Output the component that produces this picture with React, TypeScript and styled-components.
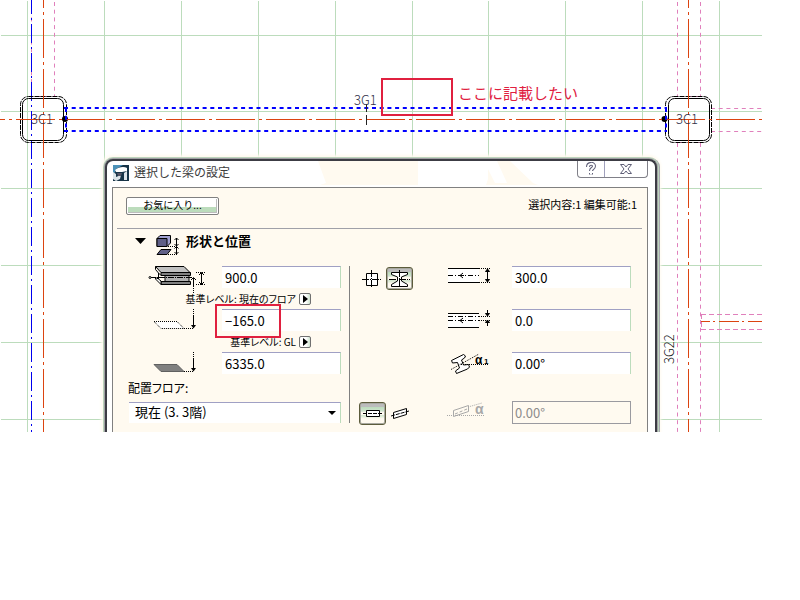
import React from 'react';
import styled, { createGlobalStyle } from 'styled-components';

const GlobalStyle = createGlobalStyle`
  * { box-sizing: border-box; }
  body { margin: 0; background: #fff; color: #000; font-family: "Noto Sans CJK JP", sans-serif; font-size: 12px; }
  button, input, select { font: inherit; color: inherit; }
`;

const Canvas = styled.main`
  position: relative;
  overflow: hidden;
  margin-right: 38px;
  padding: 159px 105px 0;
`;

const Plan = styled.svg`
  position: absolute;
  top: 0;
  left: 0;
  font-family: "Noto Sans CJK JP", sans-serif;
  font-weight: 300;
  font-size: 13px;
`;

const Marker = styled.div<{ $x: number; $y: number; $w: number; $h: number }>`
  position: absolute;
  left: ${p => p.$x}px;
  top: ${p => p.$y}px;
  width: ${p => p.$w}px;
  height: ${p => p.$h}px;
  border: 2px solid #e0203f;
  pointer-events: none;
`;

const Note = styled.div`
  position: absolute;
  left: 458px;
  top: 82px;
  color: #e0203f;
  font-size: 15px;
  line-height: 22px;
  white-space: nowrap;
`;

const Dialog = styled.section`
  position: relative;
  background: #fff;
  border: 2px solid #3c3c44;
  border-bottom: 0;
  border-radius: 8px 8px 0 0;
  box-shadow: 0 0 0 1px #a0a0a4, 0 0 0 2px #bcd4bc, 2px 0 0 1px #a8a8b0, 0 0 3px 4px #fffaf0;
  padding: 0 7px 0 5px;
`;

const TitleBar = styled.header`
  position: relative;
  display: flex;
  align-items: flex-start;
  height: 26px;
`;

const Glare = styled.svg`
  position: absolute;
  top: 0;
  left: 0;
`;

const Title = styled.h1`
  position: relative;
  flex: 1;
  margin: 2px 0 0 5px;
  color: #3c3c3c;
  font-size: 12px;
  font-weight: 400;
  line-height: 18px;
`;

const AppIcon = styled.svg`
  position: relative;
  margin: 4px 0 0 1px;
`;

const Caption = styled.div`
  position: relative;
  display: flex;
  border: 1px solid #808088;
  border-top: 0;
  border-radius: 0 0 4px 4px;
`;

const CaptionButton = styled.button<{ $w: number }>`
  display: grid;
  place-items: center;
  width: ${p => p.$w}px;
  height: 16px;
  padding: 0;
  border: 0;
  background: transparent;
  & + & { border-left: 1px solid #a0a0bc; }
`;

const Panel = styled.div`
  background: #fffaf0;
  border: 1px solid #808080;
  border-bottom: 0;
  padding: 0 5px 7px 4px;
`;

const TopRow = styled.div`
  display: flex;
  justify-content: space-between;
  align-items: flex-start;
  height: 41px;
  padding: 9px 5px 0 9px;
  border-bottom: 1px solid #a0a0a8;
`;

const Favorites = styled.button`
  width: 93px;
  height: 18px;
  padding: 0 0 3px;
  border: 1px solid #808080;
  border-radius: 2px;
  background: linear-gradient(#fff 55%, #bcdcbc 55%);
  box-shadow: inset 0 0 0 1px #fff, inset -1px -1px 0 1px #bcbcbc;
  font-size: 10px;
  line-height: 13px;
`;

const Counts = styled.span`
  font-size: 11px;
  line-height: 14px;
  font-feature-settings: "palt";
`;

const SectionHead = styled.h2`
  display: flex;
  align-items: center;
  height: 37px;
  margin: 0;
  padding: 0 0 14px 18px;
  font-size: 13px;
  font-weight: 700;
  line-height: 22px;
`;

const Toggle = styled.button`
  display: flex;
  padding: 0;
  border: 0;
  background: transparent;
  margin-right: 10px;
`;

const HeadIcon = styled.svg`
  align-self: flex-end;
  margin: 0 6px -4px 0;
`;

const Columns = styled.div`
  display: grid;
  grid-template-columns: 233px 1fr;
`;

const Left = styled.div`
  padding: 0 8px 0 11px;
  border-right: 1px solid #808080;
  height: 157px;
`;

const Right = styled.div`
  display: grid;
  grid-template-columns: 88px 1fr 119px;
  grid-template-rows: 43px 43px 49px 24px;
  padding: 0 11px 0 9px;
`;

const Row = styled.div`
  display: grid;
  grid-template-columns: 94px 1fr;
  height: 22px;
`;

const IconSlot = styled.span<{ $left?: number }>`
  height: 22px;
  padding-left: ${p => p.$left ?? 0}px;
`;

const Field = styled.input`
  width: 100%;
  min-width: 0;
  height: 22px;
  padding: 0 3px;
  border: 0 solid;
  border-width: 1px 1px 0 0;
  border-color: #a0a0c4 #bcdcbc transparent transparent;
  border-radius: 0;
  outline: 0;
  background: #fff;
  font-size: 13px;
  &:disabled {
    height: 23px;
    border: 1px solid #9a9aa0;
    padding: 0 2px;
    background: #fffaf0;
    color: #8c8c8c;
  }
`;

const Basis = styled.div`
  display: flex;
  justify-content: flex-end;
  align-items: center;
  gap: 3px;
  height: 21px;
  padding-right: 30px;
  font-size: 10px;
  line-height: 16px;
  font-feature-settings: "palt";
`;

const Pop = styled.button`
  display: grid;
  place-items: center;
  width: 12px;
  height: 12px;
  padding: 0;
  border: 1px solid #707070;
  border-radius: 2px;
  background: linear-gradient(90deg, #fff 60%, #cfe4cf);
`;

const FloorLabel = styled.label`
  display: block;
  height: 28px;
  line-height: 27px;
  font-size: 12px;
  font-feature-settings: "palt";
`;

const SelectWrap = styled.div`
  position: relative;
  display: grid;
  align-items: center;
  margin-left: 1px;
`;

const Select = styled.select`
  appearance: none;
  width: 100%;
  height: 21px;
  padding: 0 6px 3px;
  border: 0 solid;
  border-width: 1px 1px 0 0;
  border-color: #a0a0c4 #bcdcbc;
  border-radius: 0;
  background: #fff;
  font-size: 13px;
  line-height: 17px;
  font-feature-settings: "palt";
`;

const Arrow = styled.svg`
  position: absolute;
  right: 5px;
`;

const Tools = styled.div<{ $indent?: number }>`
  display: flex;
  align-items: flex-start;
  gap: 4px;
  padding-left: ${p => p.$indent ?? 0}px;
`;

const Tool = styled.button<{ $on?: boolean }>`
  display: grid;
  place-items: center;
  width: ${p => (p.$on ? 27 : 20)}px;
  height: 23px;
  padding: 0;
  border: ${p => (p.$on ? '1px solid #5c5c3c' : '0')};
  border-radius: 3px;
  background: ${p => (p.$on ? 'linear-gradient(#bcbcbc 20%, #bcdcbc 20%, #cfe4cf 38%, #fffaf0 45%, #fffaf0 55%, #d4e8d0 60%, #fffaf0 75%)' : 'transparent')};
  box-shadow: ${p => (p.$on ? '0 0 0 1px #a8a8a0 inset' : 'none')};
  margin-top: 1px;
`;

const verticals = [27, 104, 181, 258, 335, 412, 488, 565, 642, 719];
const horizontals = [35, 111, 188, 265, 342, 419];

const Column = ({ x, mirrored }: { x: number; mirrored?: boolean }) => (
  <g fill="none" stroke="#000">
    <rect x={x} y="96.5" width="46" height="46" rx="8" strokeDasharray="5 1" />
    <rect x={x + (mirrored ? 3 : 2)} y="98.5" width="41" height="42" rx="6" />
    <circle cx={mirrored ? x - 1 : x + 44.5} cy="119" r="3" fill="#000" stroke="none" />
  </g>
);

const PlanDrawing = () => (
  <Plan width="762" height="432" viewBox="0 0 762 432" aria-hidden="true">
    <g stroke="#bcdcbc">
      {verticals.map(x => <path key={x} d={`M${x}.5 1V432`} />)}
      {horizontals.map(y => <path key={y} d={`M1 ${y}.5H762`} />)}
    </g>
    <g stroke="#e080bc" strokeDasharray="4 3.7" fill="none">
      <path d="M31.5 2V97M54.5 2V97M677.5 2V97M700.5 2V97M677.5 143V432M700.5 143V432" />
      <path d="M711 108.5H762M711 131.5H762M37 96.5H54M680 96.5H702M680 142.5H702" />
      <path d="M701 314.5H762M701 329.5H762M701.5 314V329" strokeDasharray="5 3" />
    </g>
    <path d="M31.5 -5V432" stroke="#00e" strokeDasharray="19 4 2 4" />
    <Column x={20.5} />
    <Column x={665.5} mirrored />
    <g stroke="#dc4410" strokeDasharray="39 4 3 4">
      <path d="M43.5 -31V432M688.5 -31V432M-34 119.5H762" />
      <path d="M701 321.5H762" strokeDasharray="20 3 2 4" strokeDashoffset="11" />
    </g>
    <g stroke="#00f" strokeWidth="2" strokeDasharray="4 3.7">
      <path d="M64 108H667M64 131H667M66 108V132M666 108V132" />
    </g>
    <path d="M366.5 104V112M366.5 115V125" stroke="#222" />
    <g fill="#303048">
      <text x="31" y="124">3C1</text>
      <text x="676" y="124">3C1</text>
      <text x="354" y="105">3G1</text>
      <text transform="translate(674 364) rotate(-90)" fill="#111">3G22</text>
    </g>
  </Plan>
);

const BeamIcon = () => (
  <svg width="60" height="27" viewBox="0 0 60 27" fill="none" stroke="#000">
    <path d="M7.500 0.500H36L42 6.500H13z" fill="#c0c0c0" />
    <path d="M13 6.500H42.500V9.500H13zM13 15.500H42.500V18.500H13z" fill="#808080" />
    <path d="M17 9.500H41V15.500H17z" fill="#b0b0b0" />
    <path d="M7.500 0.500V3.500L10.500 7V13L7.500 11.500V13L13 18.500V15L10.500 13M10.500 7L13 9.500" fill="#fff" />
    <path d="M2 11.500H44" strokeDasharray="6 1 1 1" />
    <circle cx="2" cy="11.500" r="1" fill="#fff" />
    <path d="M45.500 12V20M43 14L45.500 11.500L48 14M53.500 7V19M51 9L53.500 6.500L56 9M51 16L53.500 18.500L56 16" />
    <path d="M48 6.500H57M48 18.500H57M45.500 20V27" strokeDasharray="1 1" />
  </svg>
);

const SlabIcon = ({ filled }: { filled?: boolean }) => (
  <svg width="50" height="22" viewBox="0 0 50 22" fill="none" stroke="#000">
    <path d="M5 12.500H28L35 19.500H12z" fill={filled ? '#808080' : '#fff'} stroke={filled ? '#606060' : '#000'} strokeDasharray={filled ? undefined : '1 1'} />
    <path d="M35 19.500H45M44.500 0V8" strokeDasharray="1 1" />
    <path d="M44.500 7V19" />
    <path d="M42 16H47L44.500 19.500z" fill="#000" stroke="none" />
  </svg>
);

const OffsetIcon = ({ narrow }: { narrow?: boolean }) => (
  <svg width="45" height="22" viewBox="0 0 45 22" fill="none" stroke="#000">
    {narrow ? (
      <>
        <path d="M1 4.500H32V18.500H1z" fill="#fff" stroke="none" />
        <path d="M1 4.500H32M1 18.500H32" />
        <path d="M1 7.500H32M1 11.500H32" strokeDasharray="5 2 1 2" />
        <path d="M17 11.500H13L16 9M13 11.500L16 14" />
        <path d="M32 7.500H43M32 11.500H43" strokeDasharray="1 1" />
        <path d="M40.500 1V5M38.500 4.500H42.500L40.500 7zM40.500 17V14M38.500 13.500H42.500L40.500 11z" fill="#000" />
      </>
    ) : (
      <>
        <path d="M1 2.500H32V16.500H1z" fill="#fff" stroke="none" />
        <path d="M1 2.500H32M1 16.500H32" />
        <path d="M1 9.500H32" strokeDasharray="5 2 1 2" />
        <path d="M17 9.500H13L16 7M13 9.500L16 12" />
        <path d="M32 2.500H44M32 16.500H44" strokeDasharray="1 1" />
        <path d="M40.500 3V16M38.500 5.500H42.500L40.500 3zM38.500 13.500H42.500L40.500 16z" fill="#000" />
      </>
    )}
  </svg>
);

const AngleSvg = styled.svg`
  overflow: visible;
`;

const Glyph = styled.text`
  font-family: "Liberation Sans", sans-serif;
  font-weight: 700;
  stroke: none;
`;

const AngleIcon = () => (
  <AngleSvg width="45" height="24" viewBox="0 0 45 24" fill="none" stroke="#000">
    <path d="M4.500 8.500L16.500 2.500L18.500 4L17.500 6L14.500 8L16.500 13L21.500 12.500L22.500 15L20.500 17L9.500 21.500L8.500 19L12.500 16L10.500 10.500L5.500 11z" fill="#fff" />
    <path d="M4 17.500L32 2M14 12.500H42" strokeDasharray="1 1" />
    <Glyph x="28" y="12" fontSize="12" fill="#000">α</Glyph>
    <Glyph x="37" y="12" fontSize="8" fill="#000">1</Glyph>
  </AngleSvg>
);

const SlopeIcon = () => (
  <AngleSvg width="45" height="24" viewBox="0 0 45 24" fill="none" stroke="#a8a8a8">
    <path d="M6.500 9.500L21.500 4.500V10.500L6.500 15.500z" />
    <path d="M8 13L20 8" strokeDasharray="3 2" />
    <path d="M21 6L35 2M0 14.500H38" strokeDasharray="1 1" />
    <Glyph x="28" y="13" fontSize="14" fill="#a8a8a8">α</Glyph>
  </AngleSvg>
);

export default function App() {
  return (
    <>
      <GlobalStyle />
      <Canvas>
        <PlanDrawing />
        <Marker $x={381} $y={78} $w={72} $h={38} />
        <Note>ここに記載したい</Note>
        <Dialog aria-labelledby="dialog-title">
          <TitleBar>
            <Glare width="460" height="26" viewBox="0 0 460 26" aria-hidden="true">
              <path d="M206 0H306V24H208L214 22zM385 0H398L421 22L426 24H374L376 18V8L383 22H395z" fill="#fffaf0" />
            </Glare>
            <AppIcon width="16" height="16" viewBox="0 0 16 16" aria-hidden="true">
              <path d="M0 0H16V16H0z" fill="#173447" />
              <path d="M0 0H10L3 4L0 12z" fill="#4c91b8" />
              <path d="M2 5C5 2 11 1 14 3L14 6L9 7H3z" fill="#fff" />
              <path d="M0 7L3 9V12L8 10L7 14L3 16L0 14zM11 8L14 6L14 15H11z" fill="#dce4e8" />
              <path d="M4 8H9L8 11H5z" fill="#556" />
            </AppIcon>
            <Title id="dialog-title">選択した梁の設定</Title>
            <Caption>
              <CaptionButton $w={26} aria-label="ヘルプ">
                <svg width="12" height="14" viewBox="0 0 12 14" fill="none">
                  <path d="M3 5C3 1 9 1 9 4C9 7 6 6 6 9M6 11V12.500" stroke="#606078" strokeWidth="4" />
                  <path d="M3 5C3 1 9 1 9 4C9 7 6 6 6 9M6 11V12.500" stroke="#fff" strokeWidth="2" />
                </svg>
              </CaptionButton>
              <CaptionButton $w={43} aria-label="閉じる">
                <svg width="14" height="12" viewBox="0 0 14 12">
                  <path d="M1.500 1.500H5L7 4L9 1.500H12.500L9 6L12.500 10.500H9L7 8L5 10.500H1.500L5 6z" fill="#fff" stroke="#606078" />
                </svg>
              </CaptionButton>
            </Caption>
          </TitleBar>
          <Panel>
            <TopRow>
              <Favorites>お気に入り...</Favorites>
              <Counts>選択内容:1 編集可能:1</Counts>
            </TopRow>
            <SectionHead>
              <Toggle aria-label="形状と位置を折りたたむ">
                <svg width="11" height="6" viewBox="0 0 11 6"><path d="M0 0H11L5.500 6z" /></svg>
              </Toggle>
              <HeadIcon width="24" height="22" viewBox="0 0 24 22" fill="none" stroke="#000" aria-hidden="true">
                <path d="M1 4.500L4 1.500H14.500V9L11 12.500H1z" fill="#a0a0d0" />
                <path d="M1 4.500H11V12.500H1z" fill="#606088" />
                <path d="M5 15.500H15L11 20.500H1z" fill="#606088" />
                <path d="M12 12.500H22M12 20.500H22" strokeDasharray="1 1" />
                <path d="M20.500 4V20M18.500 6L20.500 4L22.500 6M18.500 10L20.500 12L22.500 10M18.500 14.500L20.500 12.500L22.500 14.500M18.500 18L20.500 20L22.500 18" />
              </HeadIcon>
              形状と位置
            </SectionHead>
            <Columns>
              <Left>
                <Row>
                  <IconSlot $left={20}><BeamIcon /></IconSlot>
                  <Field aria-label="高さ" defaultValue="900.0" />
                </Row>
                <Basis>基準レベル: 現在のフロア<Pop aria-label="基準レベル"><svg width="5" height="8" viewBox="0 0 5 8"><path d="M0 0L5 4L0 8z" /></svg></Pop></Basis>
                <Row>
                  <IconSlot $left={21}><SlabIcon /></IconSlot>
                  <Field aria-label="現在のフロアからの高さ" defaultValue="−165.0" />
                </Row>
                <Basis>基準レベル: GL<Pop aria-label="基準レベル"><svg width="5" height="8" viewBox="0 0 5 8"><path d="M0 0L5 4L0 8z" /></svg></Pop></Basis>
                <Row>
                  <IconSlot $left={21}><SlabIcon filled /></IconSlot>
                  <Field aria-label="GLからの高さ" defaultValue="6335.0" />
                </Row>
                <FloorLabel htmlFor="floor">配置フロア:</FloorLabel>
                <SelectWrap>
                  <Select id="floor"><option>現在 (3. 3階)</option></Select>
                  <Arrow width="8" height="4" viewBox="0 0 8 4"><path d="M0 0H8L4 4z" /></Arrow>
                </SelectWrap>
              </Left>
              <Right>
                <Tools $indent={3}>
                  <Tool aria-label="矩形断面">
                    <svg width="20" height="20" viewBox="0 0 20 20" fill="none" stroke="#000">
                      <path d="M4.500 4.500H15.500V16.500H4.500z" fill="#fff" />
                      <path d="M9.500 1V19M0 10.500H19" strokeDasharray="7 1 1 1" />
                    </svg>
                  </Tool>
                  <Tool $on aria-label="断面形状" aria-pressed="true">
                    <svg width="23" height="20" viewBox="0 0 23 20" fill="none" stroke="#000">
                      <path d="M3.500 3.500H19.500V5.500L13.500 8V12L19.500 15.500V17.500H3.500V15.500L9.500 12V8L3.500 5.500z" fill="#fff" />
                      <path d="M11.500 1V19M1 10.500H22" strokeDasharray="7 1 1 1" />
                    </svg>
                  </Tool>
                </Tools>
                <IconSlot><OffsetIcon /></IconSlot>
                <Field aria-label="幅" defaultValue="300.0" />
                <span />
                <IconSlot><OffsetIcon narrow /></IconSlot>
                <Field aria-label="オフセット" defaultValue="0.0" />
                <span />
                <IconSlot><AngleIcon /></IconSlot>
                <Field aria-label="回転角度" defaultValue="0.00°" />
                <Tools>
                  <Tool $on aria-label="水平" aria-pressed="true">
                    <svg width="20" height="10" viewBox="0 0 20 10" fill="none" stroke="#000">
                      <path d="M3.500 1.500H16.500V7.500H3.500z" fill="#fff" />
                      <path d="M0 4.500H20" strokeDasharray="4 1" />
                    </svg>
                  </Tool>
                  <Tool aria-label="傾斜">
                    <svg width="18" height="14" viewBox="0 0 18 14" fill="none" stroke="#000">
                      <path d="M2.500 5.500L15.500 1.500V7.500L2.500 11.500z" fill="#fff" />
                      <path d="M0 9L18 4" strokeDasharray="4 1" />
                    </svg>
                  </Tool>
                </Tools>
                <IconSlot><SlopeIcon /></IconSlot>
                <Field aria-label="傾斜角度" defaultValue="0.00°" disabled />
              </Right>
            </Columns>
          </Panel>
        </Dialog>
        <Marker $x={215} $y={304} $w={66} $h={34} />
      </Canvas>
    </>
  );
}
